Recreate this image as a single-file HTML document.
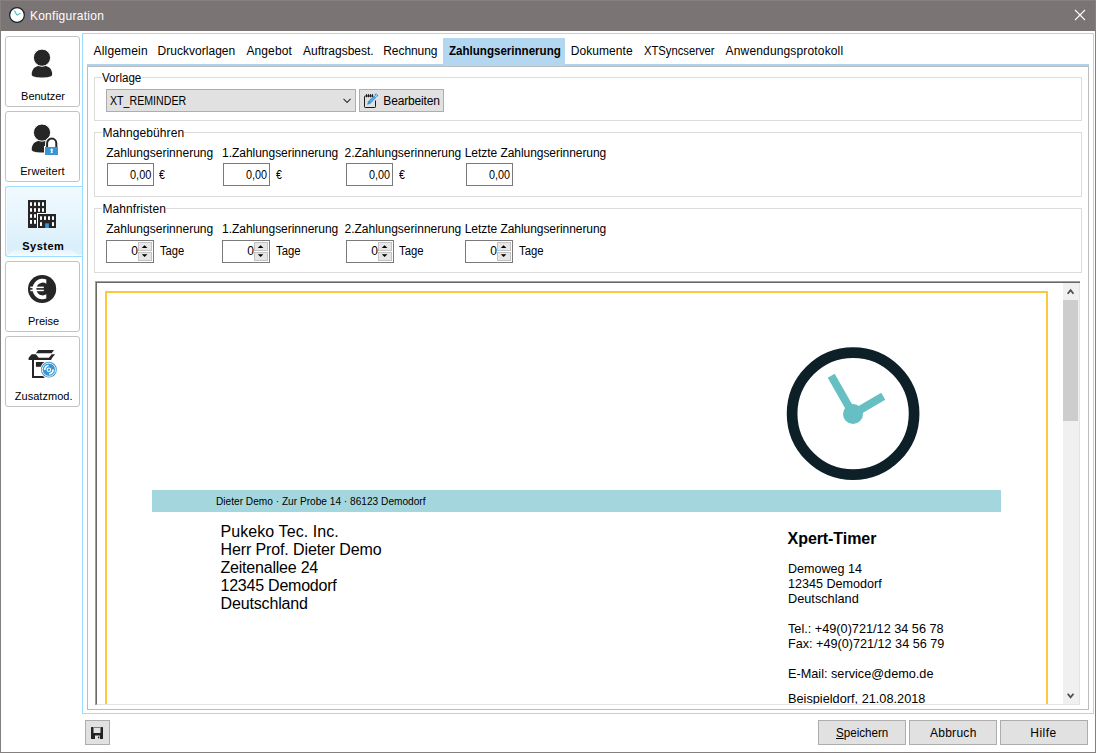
<!DOCTYPE html>
<html lang="de">
<head>
<meta charset="utf-8">
<title>Konfiguration</title>
<style>
html,body{margin:0;padding:0;}
body{width:1096px;height:753px;overflow:hidden;background:#fff;position:relative;
  font-family:"Liberation Sans",sans-serif;font-size:12px;color:#000;line-height:1;}
.abs,.abs *{box-sizing:border-box;}
.abs{position:absolute;}
.t{position:absolute;white-space:nowrap;line-height:14px;height:14px;transform-origin:0 0;}
/* window frame */
#titlebar{left:0;top:0;width:1096px;height:31px;background:#7a7474;border:1px solid #868080;border-bottom:1px solid #7a7474;}
#bl{left:0;top:31px;width:1px;height:722px;background:#858080;}
#br{left:1095px;top:31px;width:1px;height:722px;background:#858080;}
#bb{left:0;top:752px;width:1096px;height:1px;background:#858080;}
/* sidebar */
.sb{left:5px;width:75px;height:71px;border:1px solid #c3c3c3;border-radius:3px;background:#fff;}
.sb.sel{width:77px;border:1px solid #9cdcfd;border-right:none;border-radius:3px 0 0 3px;
  background:linear-gradient(#f0f9fe 0%,#e7f5fd 45%,#d9effb 88%,#e2f3fc 100%);box-shadow:inset 1px 1px 0 0 rgba(255,255,255,.55),inset 0 -1px 0 0 rgba(255,255,255,.55);}
.glow{position:absolute;left:1px;width:72px;bottom:0;height:6px;background:linear-gradient(rgba(255,255,255,.25),rgba(255,255,255,.6));clip-path:polygon(7px 0,65px 0,72px 100%,0 100%);}
.sb svg{position:absolute;left:0;top:0;}
/* main panel */
#main{left:82px;top:33px;width:1012px;height:681px;border:1px solid #9cdcfd;}
#tabline{left:87px;top:64px;width:1002px;height:2px;background:#abd3ef;}
#inner{left:87px;top:66px;width:1002px;height:644px;border:1px solid #bcbcbc;}
#tabsel{left:443px;top:38px;width:122px;height:28px;background:#b3d7f0;}
.gb{border:1px solid #dcdcdc;left:94px;width:988px;}
.inp{border:1px solid #7a7a7a;background:#fff;height:23px;}
.spb{position:absolute;left:31px;width:14px;height:9px;background:#e6e6e6;border:1px solid #c2c2c2;}
.btn{background:#e1e1e1;border:1px solid #adadad;text-align:center;}

.sparr{position:absolute;left:31px;top:1px;}
#pvframe{left:95px;top:281px;width:985px;height:424px;border-top:1px solid #a0a0a0;border-left:1px solid #a0a0a0;}
#pvframe2{left:96px;top:282px;width:984px;height:423px;border-top:1px solid #696969;border-left:1px solid #696969;border-bottom:1px solid #e3e3e3;}
#pv{left:97px;top:283px;width:966px;height:421px;overflow:hidden;background:#fff;}
#pv .t{color:#000;}
</style>
</head>
<body>
<!-- title bar -->
<div class="abs" id="titlebar"></div>
<div class="abs" id="bl"></div><div class="abs" id="br"></div><div class="abs" id="bb"></div>
<svg class="abs" style="left:8px;top:6px" width="18" height="18" viewBox="0 0 18 18">
  <circle cx="9" cy="9" r="7.35" fill="#fff" stroke="#14252d" stroke-width="1.25"/>
  <path d="M9 9.2 L6.3 4.5 M9 9.2 L12.4 7.2" stroke="#5fbcc0" stroke-width="1.3" fill="none"/>
</svg>
<svg class="abs" style="left:1074px;top:9px" width="12" height="12" viewBox="0 0 12 12">
  <path d="M1 1 L11 11 M11 1 L1 11" stroke="#fff" stroke-width="1.1" fill="none"/>
</svg>

<!-- main panel frame -->
<div class="abs" id="main"></div>
<div class="abs" id="tabline"></div>
<div class="abs" id="inner"></div>
<div class="abs" id="tabsel"></div>


<!-- SIDEBAR -->
<div class="abs sb" style="top:36px">
<svg width="73" height="69" viewBox="0 0 73 69">
  <path d="M25.7 37.6 C25.7 31.2 30.2 28.6 36 28.6 C41.8 28.6 46.2 31.2 46.2 37.6 C46.2 39.8 41.5 40.6 36 40.6 C30.5 40.6 25.7 39.8 25.7 37.6Z" fill="#262626"/>
  <circle cx="36" cy="20.7" r="8.6" fill="#262626" stroke="#fff" stroke-width="1"/>
</svg></div>
<div class="abs sb" style="top:111px">
<svg width="73" height="69" viewBox="0 0 73 69">
  <path d="M25.7 37.6 C25.7 31.2 30.2 28.6 36 28.6 C41.8 28.6 46.2 31.2 46.2 37.6 C46.2 39.8 41.5 40.6 36 40.6 C30.5 40.6 25.7 39.8 25.7 37.6Z" fill="#262626"/>
  <circle cx="36" cy="20.6" r="8.6" fill="#262626" stroke="#fff" stroke-width="1"/>
  <rect x="38" y="34" width="15" height="10" fill="#fff"/>
  <path d="M41.1 35.5 V31.2 A4.6 4.6 0 0 1 50.3 31.2 V35.5" fill="#fff" stroke="#fff" stroke-width="4"/>
  <path d="M41.1 35.5 V31.2 A4.6 4.6 0 0 1 50.3 31.2 V35.5" fill="none" stroke="#262626" stroke-width="2"/>
  <rect x="39" y="35" width="13" height="8" fill="#3a96d3"/>
  <path d="M45.7 36.6 a1.25 1.25 0 0 1 0.65 2.3 l0.35 2.2 h-2 l0.35 -2.2 a1.25 1.25 0 0 1 0.65 -2.3z" fill="#fff"/>
</svg></div>
<div class="abs sb sel" style="top:186px"><i class="glow"></i>
<svg width="73" height="69" viewBox="0 0 73 69">
  <rect x="22" y="13" width="18" height="28" fill="#262626"/>
  <rect x="31" y="26" width="9" height="15" fill="#fff"/>
  <rect x="32" y="27" width="18" height="14" fill="#262626"/>
  <g fill="#fff">
    <rect x="24" y="15.3" width="2" height="3.6"/><rect x="28" y="15.3" width="2" height="3.6"/><rect x="32" y="15.3" width="2" height="3.6"/><rect x="36" y="15.3" width="2" height="3.6"/>
    <rect x="24" y="21.2" width="2" height="3.6"/><rect x="28" y="21.2" width="2" height="3.6"/><rect x="32" y="21.2" width="2" height="3.6"/><rect x="36" y="21.2" width="2" height="3.6"/>
    <rect x="24" y="27.2" width="2" height="3.6"/><rect x="28" y="27.2" width="2" height="3.6"/>
    <rect x="24" y="33" width="2" height="3.8"/><rect x="28" y="33" width="2" height="3.8"/>
    <rect x="34" y="29.3" width="2" height="3.6"/><rect x="38" y="29.3" width="2" height="3.6"/><rect x="42" y="29.3" width="2" height="3.6"/><rect x="46" y="29.3" width="2" height="3.6"/>
    <rect x="34" y="35.2" width="2" height="3.8"/><rect x="46" y="35.2" width="2" height="3.8"/>
  </g>
  <rect x="39.2" y="36.3" width="3.7" height="4.7" fill="#3a96d3"/>
</svg></div>
<div class="abs sb" style="top:261px">
<svg width="73" height="69" viewBox="0 0 73 69">
  <circle cx="36.1" cy="27" r="14.1" fill="#262626"/>
  <path d="M40.3 17.4 A10.25 10.25 0 1 0 40.3 36.6 L40.3 32.3 A6.4 6.4 0 1 1 40.3 21.7 Z" fill="#fff"/>
  <rect x="24.3" y="24.6" width="13.5" height="1.5" fill="#fff"/>
  <rect x="24.3" y="27.7" width="13.5" height="1.5" fill="#fff"/>
</svg></div>
<div class="abs sb" style="top:336px">
<svg width="73" height="69" viewBox="0 0 73 69">
  <g fill="#262626">
    <polygon points="32.2,13 48,13 45.7,16.3 29.9,16.3"/>
    <polygon points="22.6,20.7 25.7,17.2 29.9,17.2 32.7,20.7 45.3,20.7 45.3,22.9 28,22.9 28,39 38.5,39 38.5,41 26,41 26,22.9 22.6,22.9"/>
    <polygon points="45.7,17.2 49,17.2 45.3,22 42,22"/>
    <rect x="29.9" y="25" width="7.9" height="4.8"/>
  </g>
  <circle cx="42.9" cy="32.7" r="8.8" fill="#fff"/>
  <circle cx="42.9" cy="32.7" r="7.9" fill="#3a96d3"/>
  <circle cx="42.9" cy="32.7" r="6.6" fill="none" stroke="#fff" stroke-width="0.9"/>
  <path d="M38.7 33 A4.2 4.2 0 0 1 42.6 28.5 M47.1 32.4 A4.2 4.2 0 0 1 43.2 36.9" stroke="#fff" stroke-width="1.7" fill="none"/>
  <circle cx="42.9" cy="32.7" r="2.3" fill="#fff"/>
  <circle cx="42.9" cy="32.7" r="1.2" fill="#3a96d3"/>
</svg></div>



<!-- GROUPS -->
<div class="abs gb" style="top:77px;height:44px"></div>
<div class="abs gb" style="top:132px;height:65px"></div>
<div class="abs gb" style="top:208px;height:65px"></div>
<div class="abs" style="left:102px;top:76px;width:40px;height:3px;background:#fff"></div>
<div class="abs" style="left:102px;top:131px;width:82px;height:3px;background:#fff"></div>
<div class="abs" style="left:102px;top:207px;width:64px;height:3px;background:#fff"></div>
<!-- combo -->
<div class="abs btn" style="left:106px;top:89px;width:250px;height:23px"></div>
<svg class="abs" style="left:342px;top:97px" width="10" height="7" viewBox="0 0 10 7"><path d="M1.5 1.8 L5.05 5.4 L8.6 1.8" fill="none" stroke="#333" stroke-width="1.1"/></svg>
<!-- edit button -->
<div class="abs btn" style="left:359px;top:89px;width:85px;height:23px"></div>
<svg class="abs" style="left:362px;top:92px" width="18" height="18" viewBox="0 0 18 18">
  <path d="M10.5 4 H3.2 Q2.5 4 2.5 4.7 V14.8 Q2.5 15.5 3.2 15.5 H12.8 Q13.5 15.5 13.5 14.8 V8.5" fill="none" stroke="#1a1a1a" stroke-width="1"/>
  <path d="M4.5 2.5 V4.7 M6.5 2.5 V4.7 M8.5 2.5 V4.7 M10.5 2.5 V4.7" stroke="#1a1a1a" stroke-width="1.15" stroke-linecap="round"/>
  <polygon points="5.1,12.8 6.02,9.54 11.9,3.4 14.2,5.6 8.32,11.74" fill="#3a96d3"/>
  <polygon points="12.51,2.77 14.02,1.19 16.32,3.39 14.81,4.97" fill="#3a96d3"/>
  <circle cx="14.4" cy="3.1" r="0.55" fill="#fff"/>
  <path d="M8.2 9.7 L12.2 5.4" stroke="#fff" stroke-width="0.6" opacity="0.75"/>
</svg>
<!-- Mahngebuehren inputs -->
<div class="abs inp" style="left:107px;top:163px;width:47px"></div>
<div class="abs inp" style="left:223px;top:163px;width:47px"></div>
<div class="abs inp" style="left:346px;top:163px;width:47px"></div>
<div class="abs inp" style="left:466px;top:163px;width:47px"></div>
<!-- Mahnfristen spinners -->
<div class="abs inp" style="left:106px;top:240px;width:48px"><i class="spb" style="top:1px"></i><i class="spb" style="top:11px"></i>
<svg class="sparr" width="14" height="20" viewBox="0 0 14 20"><path d="M3.8 6 L6.6 3.3 L9.4 6Z M3.8 12.2 L6.6 14.9 L9.4 12.2Z" fill="#000"/></svg></div>
<div class="abs inp" style="left:222px;top:240px;width:48px"><i class="spb" style="top:1px"></i><i class="spb" style="top:11px"></i>
<svg class="sparr" width="14" height="20" viewBox="0 0 14 20"><path d="M3.8 6 L6.6 3.3 L9.4 6Z M3.8 12.2 L6.6 14.9 L9.4 12.2Z" fill="#000"/></svg></div>
<div class="abs inp" style="left:346px;top:240px;width:48px"><i class="spb" style="top:1px"></i><i class="spb" style="top:11px"></i>
<svg class="sparr" width="14" height="20" viewBox="0 0 14 20"><path d="M3.8 6 L6.6 3.3 L9.4 6Z M3.8 12.2 L6.6 14.9 L9.4 12.2Z" fill="#000"/></svg></div>
<div class="abs inp" style="left:465px;top:240px;width:48px"><i class="spb" style="top:1px"></i><i class="spb" style="top:11px"></i>
<svg class="sparr" width="14" height="20" viewBox="0 0 14 20"><path d="M3.8 6 L6.6 3.3 L9.4 6Z M3.8 12.2 L6.6 14.9 L9.4 12.2Z" fill="#000"/></svg></div>


<!-- PREVIEW -->
<div class="abs" id="pvframe"></div><div class="abs" id="pvframe2"></div>
<div class="abs" id="pv">
  <div class="abs" style="left:8px;top:8px;width:943px;height:500px;border:2px solid #ffc73c"></div>
  <div class="abs" style="left:55px;top:207px;width:849px;height:22px;background:#a4d7dd"></div>
  <svg class="abs" style="left:685px;top:60px" width="142" height="142" viewBox="0 0 142 142">
    <circle cx="71.1" cy="70.7" r="61" fill="none" stroke="#0d1f27" stroke-width="10.7"/>
    <path d="M71 71 L49.2 32.7" stroke="#65bfc3" stroke-width="8" fill="none"/>
    <path d="M71 71 L101.2 53.3" stroke="#65bfc3" stroke-width="8" fill="none"/>
    <circle cx="71" cy="71" r="10" fill="#65bfc3"/>
  </svg>
<div class="t" style="left:119.25px;top:212px;font-size:10.5px;line-height:13px;height:13px;transform:scaleX(0.9653);">Dieter Demo · Zur Probe 14 · 86123 Demodorf</div>
<div class="t" style="left:123.5px;top:239px;font-size:16px;line-height:19px;height:19px;letter-spacing:0.08px;">Pukeko Tec. Inc.</div>
<div class="t" style="left:123.5px;top:257px;font-size:16px;line-height:19px;height:19px;letter-spacing:-0.114px;">Herr Prof. Dieter Demo</div>
<div class="t" style="left:123.5px;top:275px;font-size:16px;line-height:19px;height:19px;letter-spacing:-0.212px;">Zeitenallee 24</div>
<div class="t" style="left:123.5px;top:293px;font-size:16px;line-height:19px;height:19px;letter-spacing:-0.231px;">12345 Demodorf</div>
<div class="t" style="left:123.5px;top:311px;font-size:16px;line-height:19px;height:19px;letter-spacing:-0.15px;">Deutschland</div>
<div class="t" style="left:690.6px;top:246px;font-size:16px;line-height:19px;height:19px;letter-spacing:-0.075px;font-weight:bold;">Xpert-Timer</div>
<div class="t" style="left:690.6px;top:278px;font-size:13.33px;line-height:16px;height:16px;transform:scaleX(0.9416);">Demoweg 14</div>
<div class="t" style="left:690.6px;top:293px;font-size:13.33px;line-height:16px;height:16px;transform:scaleX(0.9439);">12345 Demodorf</div>
<div class="t" style="left:690.6px;top:308px;font-size:13.33px;line-height:16px;height:16px;transform:scaleX(0.9549);">Deutschland</div>
<div class="t" style="left:690.6px;top:338px;font-size:13.33px;line-height:16px;height:16px;transform:scaleX(0.9525);">Tel.: +49(0)721/12 34 56 78</div>
<div class="t" style="left:690.6px;top:353px;font-size:13.33px;line-height:16px;height:16px;transform:scaleX(0.9479);">Fax: +49(0)721/12 34 56 79</div>
<div class="t" style="left:690.6px;top:383px;font-size:13.33px;line-height:16px;height:16px;transform:scaleX(0.952);">E-Mail: service@demo.de</div>
<div class="t" style="left:690.6px;top:408px;font-size:13.33px;line-height:16px;height:16px;transform:scaleX(0.956);">Beispieldorf, 21.08.2018</div>
</div>
<!-- scrollbar -->
<div class="abs" style="left:1063px;top:283px;width:17px;height:421px;background:#f0f0f0;border-right:1px solid #e3e3e3"></div>
<div class="abs" style="left:1063px;top:300px;width:15px;height:121px;background:#cdcdcd"></div>
<svg class="abs" style="left:1063px;top:283px" width="17" height="17" viewBox="0 0 17 17"><path d="M4.7 10.7 L7.6 7.1 L10.5 10.7" fill="none" stroke="#505050" stroke-width="1.8"/></svg>
<svg class="abs" style="left:1063px;top:687px" width="17" height="17" viewBox="0 0 17 17"><path d="M4.7 6.8 L7.6 10.4 L10.5 6.8" fill="none" stroke="#505050" stroke-width="1.8"/></svg>


<!-- BOTTOM -->
<div class="abs btn" style="left:85px;top:720px;width:25px;height:25px"></div>
<svg class="abs" style="left:91px;top:727px" width="12" height="12" viewBox="0 0 12 12">
  <path d="M0 0.6 Q0 0 0.6 0 H11.4 Q12 0 12 0.6 V11.4 Q12 12 11.4 12 H0.6 Q0 12 0 11.4Z" fill="#222"/>
  <rect x="2.5" y="0" width="7" height="6" fill="#e1e1e1"/>
  <rect x="2.5" y="0" width="7" height="1" fill="#3a96d3"/>
  <rect x="4" y="8.5" width="5" height="3.5" fill="#e1e1e1"/>
  <rect x="7" y="9.5" width="1.3" height="1.8" fill="#222"/>
</svg>
<div class="abs btn" style="left:818px;top:720px;width:88px;height:25px"></div>
<div class="abs btn" style="left:909px;top:720px;width:88px;height:25px"></div>
<div class="abs btn" style="left:1000px;top:720px;width:88px;height:25px"></div>
<div class="t" style="left:29.9px;top:9px;line-height:15px;height:15px;letter-spacing:0.267px;color:#fff;">Konfiguration</div>
<div class="t" style="left:21.1px;top:90px;font-size:11px;line-height:13px;height:13px;letter-spacing:-0.029px;">Benutzer</div>
<div class="t" style="left:20.15px;top:165px;font-size:11px;line-height:13px;height:13px;letter-spacing:0.138px;">Erweitert</div>
<div class="t" style="left:22.3px;top:240px;font-size:11px;line-height:13px;height:13px;letter-spacing:0.48px;font-weight:bold;">System</div>
<div class="t" style="left:28.0px;top:315px;font-size:11px;line-height:13px;height:13px;">Preise</div>
<div class="t" style="left:14.75px;top:390px;font-size:11px;line-height:13px;height:13px;letter-spacing:0.033px;">Zusatzmod.</div>
<div class="t" style="left:93.62px;top:44px;line-height:15px;height:15px;letter-spacing:0.156px;">Allgemein</div>
<div class="t" style="left:157.62px;top:44px;line-height:15px;height:15px;letter-spacing:0.021px;">Druckvorlagen</div>
<div class="t" style="left:246.38px;top:44px;line-height:15px;height:15px;letter-spacing:0.125px;">Angebot</div>
<div class="t" style="left:303.0px;top:44px;line-height:15px;height:15px;">Auftragsbest.</div>
<div class="t" style="left:383.25px;top:44px;line-height:15px;height:15px;letter-spacing:-0.071px;">Rechnung</div>
<div class="t" style="left:448.5px;top:44px;line-height:15px;height:15px;transform:scaleX(0.9635);font-weight:bold;">Zahlungserinnerung</div>
<div class="t" style="left:570.75px;top:44px;line-height:15px;height:15px;letter-spacing:0.062px;">Dokumente</div>
<div class="t" style="left:644.12px;top:44px;line-height:15px;height:15px;transform:scaleX(0.9358);">XTSyncserver</div>
<div class="t" style="left:725.62px;top:44px;line-height:15px;height:15px;letter-spacing:0.153px;">Anwendungsprotokoll</div>
<div class="t" style="left:101.6px;top:71px;line-height:15px;height:15px;transform:scaleX(0.965);">Vorlage</div>
<div class="t" style="left:102.4px;top:126px;line-height:15px;height:15px;letter-spacing:0.091px;">Mahngebühren</div>
<div class="t" style="left:102.5px;top:202px;line-height:15px;height:15px;letter-spacing:0.07px;">Mahnfristen</div>
<div class="t" style="left:110.0px;top:94px;line-height:15px;height:15px;transform:scaleX(0.8857);">XT_REMINDER</div>
<div class="t" style="left:383.3px;top:94px;line-height:15px;height:15px;letter-spacing:-0.156px;">Bearbeiten</div>
<div class="t" style="left:106.2px;top:146px;line-height:15px;height:15px;letter-spacing:0.018px;">Zahlungserinnerung</div>
<div class="t" style="left:222.0px;top:146px;line-height:15px;height:15px;letter-spacing:-0.026px;">1.Zahlungserinnerung</div>
<div class="t" style="left:344.5px;top:146px;line-height:15px;height:15px;">2.Zahlungserinnerung</div>
<div class="t" style="left:464.75px;top:146px;line-height:15px;height:15px;letter-spacing:-0.052px;">Letzte Zahlungserinnerung</div>
<div class="t" style="left:130.1px;top:168px;line-height:15px;height:15px;transform:scaleX(0.913);">0,00</div>
<div class="t" style="left:246.0px;top:168px;line-height:15px;height:15px;transform:scaleX(0.9022);">0,00</div>
<div class="t" style="left:369.0px;top:168px;line-height:15px;height:15px;transform:scaleX(0.9022);">0,00</div>
<div class="t" style="left:489.0px;top:168px;line-height:15px;height:15px;transform:scaleX(0.9022);">0,00</div>
<div class="t" style="left:159.2px;top:168px;line-height:15px;height:15px;transform:scaleX(0.88);">€</div>
<div class="t" style="left:275.5px;top:168px;line-height:15px;height:15px;transform:scaleX(0.88);">€</div>
<div class="t" style="left:398.75px;top:168px;line-height:15px;height:15px;transform:scaleX(0.88);">€</div>
<div class="t" style="left:106.2px;top:222px;line-height:15px;height:15px;letter-spacing:0.018px;">Zahlungserinnerung</div>
<div class="t" style="left:222.0px;top:222px;line-height:15px;height:15px;letter-spacing:-0.026px;">1.Zahlungserinnerung</div>
<div class="t" style="left:344.5px;top:222px;line-height:15px;height:15px;">2.Zahlungserinnerung</div>
<div class="t" style="left:464.75px;top:222px;line-height:15px;height:15px;letter-spacing:-0.052px;">Letzte Zahlungserinnerung</div>
<div class="t" style="left:131.3px;top:244px;line-height:15px;height:15px;">0</div>
<div class="t" style="left:247.3px;top:244px;line-height:15px;height:15px;">0</div>
<div class="t" style="left:371.3px;top:244px;line-height:15px;height:15px;">0</div>
<div class="t" style="left:490.3px;top:244px;line-height:15px;height:15px;">0</div>
<div class="t" style="left:159.5px;top:244px;line-height:15px;height:15px;transform:scaleX(0.9327);">Tage</div>
<div class="t" style="left:275.5px;top:244px;line-height:15px;height:15px;transform:scaleX(0.9423);">Tage</div>
<div class="t" style="left:399.0px;top:244px;line-height:15px;height:15px;transform:scaleX(0.9423);">Tage</div>
<div class="t" style="left:519.0px;top:244px;line-height:15px;height:15px;transform:scaleX(0.9423);">Tage</div>
<div class="t" style="left:835.88px;top:726px;line-height:15px;height:15px;transform:scaleX(0.967);"><u>S</u>peichern</div>
<div class="t" style="left:929.88px;top:726px;line-height:15px;height:15px;letter-spacing:0.292px;">Abbruch</div>
<div class="t" style="left:1030.25px;top:726px;line-height:15px;height:15px;letter-spacing:0.5px;">Hilfe</div>

</body>
</html>
